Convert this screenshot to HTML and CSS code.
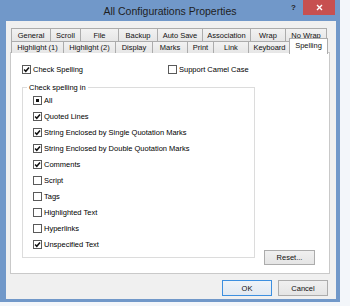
FILE: index.html
```html
<!DOCTYPE html>
<html>
<head>
<meta charset="utf-8">
<link rel="stylesheet" href="styles.css">
</head>
<body>
<div class="window">
  <div class="titlebar">
    <span class="title">All Configurations Properties</span>
    <span class="help">?</span>
    <span class="close"><svg width="7" height="7" viewBox="0 0 7 7"><path d="M1 1 L6 6 M6 1 L1 6" stroke="#fff" stroke-width="1.4"/></svg></span>
  </div>
  <div class="client">
    <div class="tabs">
      <div class="tabrow row1">
        <div class="tab">General</div>
        <div class="tab">Scroll</div>
        <div class="tab">File</div>
        <div class="tab">Backup</div>
        <div class="tab">Auto Save</div>
        <div class="tab">Association</div>
        <div class="tab">Wrap</div>
        <div class="tab last">No Wrap</div>
      </div>
      <div class="tabrow row2">
        <div class="tab">Highlight (1)</div>
        <div class="tab">Highlight (2)</div>
        <div class="tab">Display</div>
        <div class="tab">Marks</div>
        <div class="tab">Print</div>
        <div class="tab">Link</div>
        <div class="tab">Keyboard</div>
        <div class="tab last selected">Spelling</div>
      </div>
    </div>
    <div class="panel">
      <div class="main">
        <div class="toprow">
          <div class="cb"><span class="box"><svg class="tick" viewBox="0 0 7 7"><path d="M1.1 3.4 L2.8 5.3 L6 1.4"/></svg></span><span>Check Spelling</span></div>
          <div class="cb"><span class="box"></span><span>Support Camel Case</span></div>
        </div>
        <div class="group">
          <span class="group-title">Check spelling in</span>
          <div class="cb row"><span class="box"><span class="ind"></span></span><span>All</span></div>
          <div class="cb row"><span class="box"><svg class="tick" viewBox="0 0 7 7"><path d="M1.1 3.4 L2.8 5.3 L6 1.4"/></svg></span><span>Quoted Lines</span></div>
          <div class="cb row"><span class="box"><svg class="tick" viewBox="0 0 7 7"><path d="M1.1 3.4 L2.8 5.3 L6 1.4"/></svg></span><span>String Enclosed by Single Quotation Marks</span></div>
          <div class="cb row"><span class="box"><svg class="tick" viewBox="0 0 7 7"><path d="M1.1 3.4 L2.8 5.3 L6 1.4"/></svg></span><span>String Enclosed by Double Quotation Marks</span></div>
          <div class="cb row"><span class="box"><svg class="tick" viewBox="0 0 7 7"><path d="M1.1 3.4 L2.8 5.3 L6 1.4"/></svg></span><span>Comments</span></div>
          <div class="cb row"><span class="box"></span><span>Script</span></div>
          <div class="cb row"><span class="box"></span><span>Tags</span></div>
          <div class="cb row"><span class="box"></span><span>Highlighted Text</span></div>
          <div class="cb row"><span class="box"></span><span>Hyperlinks</span></div>
          <div class="cb row"><span class="box"><svg class="tick" viewBox="0 0 7 7"><path d="M1.1 3.4 L2.8 5.3 L6 1.4"/></svg></span><span>Unspecified Text</span></div>
        </div>
      </div>
      <div class="side">
        <div class="btn reset">Reset...</div>
      </div>
    </div>
    <div class="buttons">
      <div class="btn default">OK</div>
      <div class="btn">Cancel</div>
    </div>
  </div>
</div>
</body>
</html>
```
FILE: styles.css
```css
html, body {
  margin: 0;
  background: #f3f6fa;
}
body {
  font-family: "Liberation Sans", Arial, sans-serif;
  font-size: 7.5px;
  color: #000;
}
.window {
  width: 340px;
  height: 302px;
  box-sizing: border-box;
  background: #7198c9;
  padding: 0 4px 3px 6px;
}
.titlebar {
  position: relative;
  height: 21px;
  margin: 0 -4px 0 -6px;
  box-sizing: border-box;
  padding-top: 1px;
  line-height: 20px;
  text-align: center;
}
.title {
  font-size: 10.5px;
  color: #1e1e1e;
}
.help {
  position: absolute;
  left: 291px;
  top: 0;
  line-height: 16px;
  font-size: 8px;
  font-weight: bold;
  color: #222;
}
.close {
  position: absolute;
  left: 303px;
  top: 0;
  width: 32px;
  height: 15px;
  background: #c75050;
  display: flex;
  align-items: center;
  justify-content: center;
}
.client {
  width: 330px;
  height: 278px;
  box-sizing: border-box;
  background: #f0f0f0;
  padding: 7px 6px 0 4px;
}
.tabs {
  margin-left: 1px;
}
.tabrow {
  display: grid;
  width: 316px;
}
.row1 {
  grid-template-columns: 39px 30px 38px 39px 45px 48px 35px 42px;
  height: 13px;
}
.row2 {
  grid-template-columns: 52px 52px 37px 35px 26px 35px 42px 37px;
  height: 12px;
}
.tab {
  border-top: 1px solid #acacac;
  border-left: 1px solid #acacac;
  background: linear-gradient(#f2f2f2, #e6e6e6);
  display: flex;
  align-items: center;
  justify-content: center;
  line-height: 9px;
  white-space: nowrap;
  color: #111;
}
.tab.last {
  border-right: 1px solid #acacac;
}
.tab.selected {
  position: relative;
  z-index: 1;
  margin: -3px -1px -1px -1px;
  background: #fff;
  padding-bottom: 2px;
}
.panel {
  margin-top: -1px;
  width: 320px;
  height: 222px;
  box-sizing: border-box;
  background: #fff;
  border: 1px solid #c9c9c9;
  padding: 12px 14px 8px 11px;
  display: flex;
}
.main {
  width: 233px;
}
.toprow {
  display: grid;
  grid-template-columns: 146px auto;
  height: 9px;
}
.cb {
  display: flex;
  align-items: center;
  white-space: nowrap;
  line-height: 9px;
}
.box {
  width: 9px;
  height: 9px;
  box-sizing: border-box;
  border: 1px solid #5a5a5a;
  background: #fff;
  margin-right: 2px;
  flex: none;
  display: flex;
  align-items: center;
  justify-content: center;
}
.tick {
  width: 7px;
  height: 7px;
}
.tick path {
  fill: none;
  stroke: #111;
  stroke-width: 1.5;
}
.ind {
  width: 3px;
  height: 3px;
  background: #111;
}
.group {
  margin-top: 13px;
  border: 1px solid #dcdcdc;
  padding: 0 0 5px 10px;
}
.group-title {
  display: block;
  width: max-content;
  margin: -5px 0 0 -6px;
  padding: 0 2px;
  background: #fff;
  line-height: 9px;
}
.row {
  height: 16px;
}
.side {
  flex: 1;
  display: flex;
  flex-direction: column;
  justify-content: flex-end;
  align-items: flex-end;
}
.btn {
  box-sizing: border-box;
  width: 51px;
  height: 15px;
  border: 1px solid #acacac;
  background: linear-gradient(#f0f0f0, #e5e5e5);
  display: flex;
  align-items: center;
  justify-content: center;
  color: #111;
}
.btn.default {
  border-color: #3c8fe0;
  background: linear-gradient(#eef3f8, #e2e9f1);
}
.buttons {
  display: flex;
  justify-content: flex-end;
  gap: 6px;
  margin-top: 6px;
  padding-right: 2px;
}
.buttons .btn {
  width: 50px;
  height: 16px;
}
```
